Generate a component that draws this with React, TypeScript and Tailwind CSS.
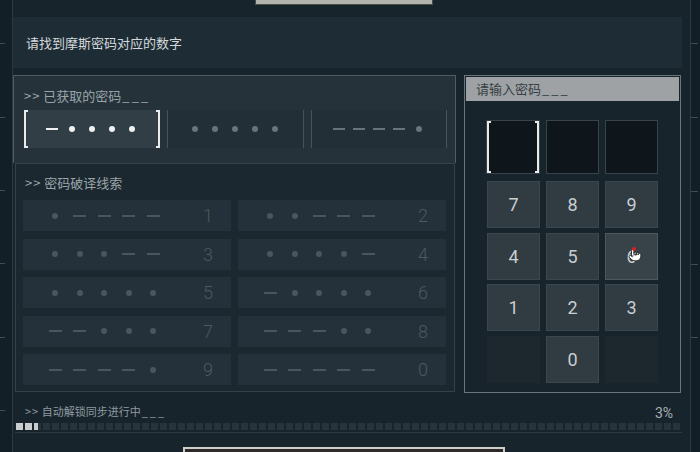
import { Pointer } from "lucide-react";

const CLUES: [string, string][] = [
  ["1", ".----"],
  ["2", "..---"],
  ["3", "...--"],
  ["4", "....-"],
  ["5", "....."],
  ["6", "-...."],
  ["7", "--..."],
  ["8", "---.."],
  ["9", "----."],
  ["0", "-----"],
];

const CODES = [
  { code: "-....", active: true },
  { code: ".....", active: false },
  { code: "----.", active: false },
];

const KEYS = ["7", "8", "9", "4", "5", "6", "1", "2", "3", "", "0", ""];

const LEFT_TICKS = [43, 117, 190, 263, 337, 410];
const RIGHT_TICKS = [43, 117, 191, 264, 337];

function ClueMorse({ code }: { code: string }) {
  return (
    <div className="flex items-center gap-[10.5px]">
      {code.split("").map((c, i) => (
        <div key={i} className="flex w-[14px] justify-center">
          {c === "-" ? (
            <span className="h-[2px] w-[13px] bg-[#4a555c]" />
          ) : (
            <span className="size-[6px] rounded-full bg-[#4a555c]" />
          )}
        </div>
      ))}
    </div>
  );
}

function CodeMorse({ code, active }: { code: string; active: boolean }) {
  return (
    <div className="flex items-center gap-[6px]">
      {code.split("").map((c, i) => (
        <div key={i} className="flex w-[14px] justify-center">
          {c === "-" ? (
            <span
              className={
                active ? "h-[2px] w-[12px] bg-[#eef0f1]" : "h-[2px] w-[12px] bg-[#69747a]"
              }
            />
          ) : (
            <span
              className={
                active
                  ? "size-[6px] rounded-full bg-[#eef0f1]"
                  : "size-[6px] rounded-full bg-[#69747a]"
              }
            />
          )}
        </div>
      ))}
    </div>
  );
}

function Brackets() {
  return (
    <>
      <span className="absolute bottom-0 left-0 top-0 w-[4px] border-y-2 border-l-2 border-[#e8eaeb]" />
      <span className="absolute bottom-0 right-0 top-0 w-[4px] border-y-2 border-r-2 border-[#e8eaeb]" />
    </>
  );
}

function Blanks() {
  return <span className="ml-[1px] tracking-[2px]">___</span>;
}

export default function App() {
  return (
    <div className="relative h-[452px] w-[700px] overflow-hidden bg-[#131f27] font-['Noto_Sans_CJK_SC','Noto_Sans',sans-serif]">
      {/* top edge tab */}
      <div className="absolute left-[255px] top-0 h-[5px] w-[178px] border-x border-b border-[#4b4a45] bg-[#b3b4ad]" />

      {LEFT_TICKS.map((y) => (
        <span key={y} className="absolute left-0 h-px w-[5px] bg-[#3c4d56]" style={{ top: y }} />
      ))}
      {RIGHT_TICKS.map((y) => (
        <span key={y} className="absolute left-[691px] h-px w-[7px] bg-[#3c4d56]" style={{ top: y }} />
      ))}

      <div className="ml-[12px] flex h-full w-[679px] flex-col border-x border-[#2a3943] bg-[#17242c] pt-[17px]">
        <div className="mr-[8px] flex h-[51px] items-center bg-[#1e2c35] pl-[13px] text-[13px] text-[#d3d9dc]">
          请找到摩斯密码对应的数字
        </div>

        <div className="mt-[7px] flex gap-[8px]">
          {/* left column */}
          <div className="flex w-[443px] flex-col">
            <div className="h-[88px] border-x border-t border-[#4f5c64] bg-[#25323a] pl-[10px] pr-[8px] pt-[11px]">
              <div className="text-[13px] leading-[18px] text-[#9aa4a9]">
                <span className="tracking-[1px]">&gt;&gt;</span> 已获取的密码
                <Blanks />
              </div>
              <div className="mt-[5px] grid grid-cols-3 gap-[7px]">
                {CODES.map((c, i) => (
                  <div
                    key={i}
                    className={
                      c.active
                        ? "relative flex h-[38px] items-center justify-center bg-[#313e46]"
                        : "flex h-[38px] items-center justify-center border-x border-[#47535a] bg-[#222f37]"
                    }
                  >
                    {c.active && <Brackets />}
                    <CodeMorse code={c.code} active={c.active} />
                  </div>
                ))}
              </div>
            </div>

            <div className="ml-[2px] mr-px h-[229px] border border-[#33414a] bg-[#1b2830] pl-[7px] pt-[10px]">
              <div className="pl-[2px] text-[13px] leading-[18px] text-[#9aa4a9]">
                <span className="tracking-[1px]">&gt;&gt;</span> 密码破译线索
              </div>
              <div className="mt-[8px] grid w-[423px] grid-cols-2 gap-x-[7px] gap-y-[7.5px]">
                {CLUES.map(([n, code]) => (
                  <div key={n} className="flex h-[31px] items-center justify-between bg-[#25313a] pl-[25px] pr-[18px]">
                    <ClueMorse code={code} />
                    <span className="font-['Roboto',sans-serif] text-[18px] font-light text-[#4d585f]">{n}</span>
                  </div>
                ))}
              </div>
            </div>
          </div>

          {/* right panel */}
          <div className="relative h-[318px] w-[217px] border border-[#6a767d] bg-[#18242c] p-px">
            <div className="flex h-[24px] items-center bg-[#9ea2a4] pl-[10px] text-[13px] text-[#353f45]">
              请输入密码
              <Blanks />
            </div>
            <div className="ml-[20px] mt-[19px] grid grid-cols-[54px_53px_53px] gap-x-[6px]">
              {[0, 1, 2].map((i) => (
                <div key={i} className="relative h-[54px] border border-[#394449] bg-[#0e161b]">
                  {i === 0 && <Brackets />}
                </div>
              ))}
            </div>
            <div className="ml-[21px] mt-[7px] grid grid-cols-[53px_53px_53px] gap-x-[6px] gap-y-[4.5px]">
              {KEYS.map((k, i) =>
                k === "" ? (
                  <div key={i} className="h-[47px] bg-[#1c272e]" />
                ) : (
                  <div
                    key={i}
                    className={
                      k === "6"
                        ? "relative flex h-[47px] items-center justify-center border border-[#4d585e] bg-[#384349] font-['Roboto',sans-serif] text-[18px] text-[#c9ced1]"
                        : "flex h-[47px] items-center justify-center border border-[#3c474d] bg-[#303b42] font-['Roboto',sans-serif] text-[18px] text-[#c9ced1]"
                    }
                  >
                    {k}
                    {k === "6" && (
                      <>
                        <Pointer className="absolute left-[22px] top-[14px] size-[14px] fill-white text-[#222]" strokeWidth={1.5} />
                        <span className="absolute left-[26px] top-[13px] size-[4px] rounded-full bg-[#e02020]" />
                      </>
                    )}
                  </div>
                )
              )}
            </div>
          </div>
        </div>

        {/* bottom status */}
        <div className="mt-[8px] flex h-[20px] items-center justify-between pl-[12px] pr-[17px]">
          <span className="text-[11px] text-[#8f9aa0]">
            <span className="tracking-[1px]">&gt;&gt;</span> 自动解锁同步进行中
            <Blanks />
          </span>
          <span className="mt-[4px] font-['Roboto',sans-serif] text-[14px] text-[#a9b1b5]">3%</span>
        </div>
        <div className="mt-[2px] flex h-[7px] gap-[2px] pl-[3px]">
          {Array.from({ length: 74 }).map((_, i) => (
            <span
              key={i}
              className={
                i < 2
                  ? "h-full w-[7px] bg-[#c9cdd0]"
                  : i === 2
                  ? "h-full w-[7px] bg-[linear-gradient(90deg,#c9cdd0_0,#c9cdd0_4px,#27343c_4px)]"
                  : "h-full w-[7px] bg-[#27343c]"
              }
            />
          ))}
        </div>
        <div className="ml-[2px] mr-[8px] mt-[2px] h-px bg-[#2b3942]" />
      </div>

      {/* bottom edge tab */}
      <div className="absolute left-[183px] top-[447px] h-[8px] w-[322px] border-x-2 border-t-2 border-[#cfcfca] bg-[#2f2a2a]" />
    </div>
  );
}
